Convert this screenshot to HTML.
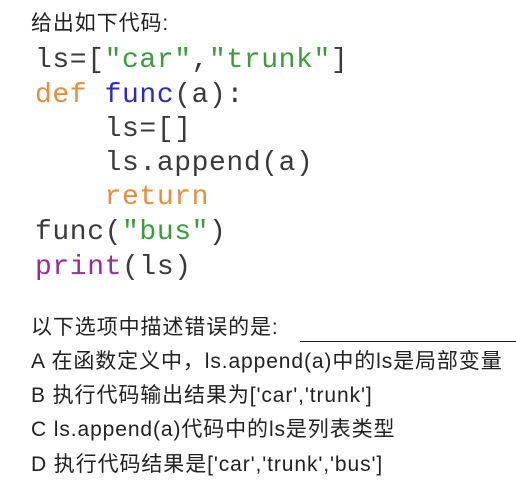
<!DOCTYPE html>
<html><head><meta charset="utf-8"><style>
body{margin:0;width:516px;height:484px;background:#fff;position:relative;overflow:hidden;font-family:"Liberation Sans","Noto Sans CJK SC",sans-serif;color:#222}
.t{position:absolute;left:31px;font-size:21px;letter-spacing:0.9px;white-space:nowrap}
.c{position:absolute;left:35px;font-family:"Liberation Mono",monospace;font-size:28px;white-space:pre;color:#3a3a3a;letter-spacing:0.6px}
.g{color:#3c9c3c}.o{color:#ec8c3c}.b{color:#2b2bc4}.p{color:#9c2a9c}
</style></head><body>
<div class="t" style="top:7px">给出如下代码:</div>
<div class="c" style="top:45px">ls=[<span class="g">"car"</span>,<span class="g">"trunk"</span>]</div>
<div class="c" style="top:80px"><span class="o">def</span> <span class="b">func</span>(a):</div>
<div class="c" style="top:114px">    ls=[]</div>
<div class="c" style="top:148px">    ls.append(a)</div>
<div class="c" style="top:182px">    <span class="o">return</span></div>
<div class="c" style="top:217px">func(<span class="g">"bus"</span>)</div>
<div class="c" style="top:252px"><span class="p">print</span>(ls)</div>
<div class="t" style="top:311px">以下选项中描述错误的是:</div>
<div style="position:absolute;left:300px;top:341px;width:216px;height:1px;background:#222"></div>
<div class="t" style="top:345px">A 在函数定义中，ls.append(a)中的ls是局部变量</div>
<div class="t" style="top:379px">B 执行代码输出结果为['car','trunk']</div>
<div class="t" style="top:413px">C ls.append(a)代码中的ls是列表类型</div>
<div class="t" style="top:448px">D 执行代码结果是['car','trunk','bus']</div>
</body></html>
